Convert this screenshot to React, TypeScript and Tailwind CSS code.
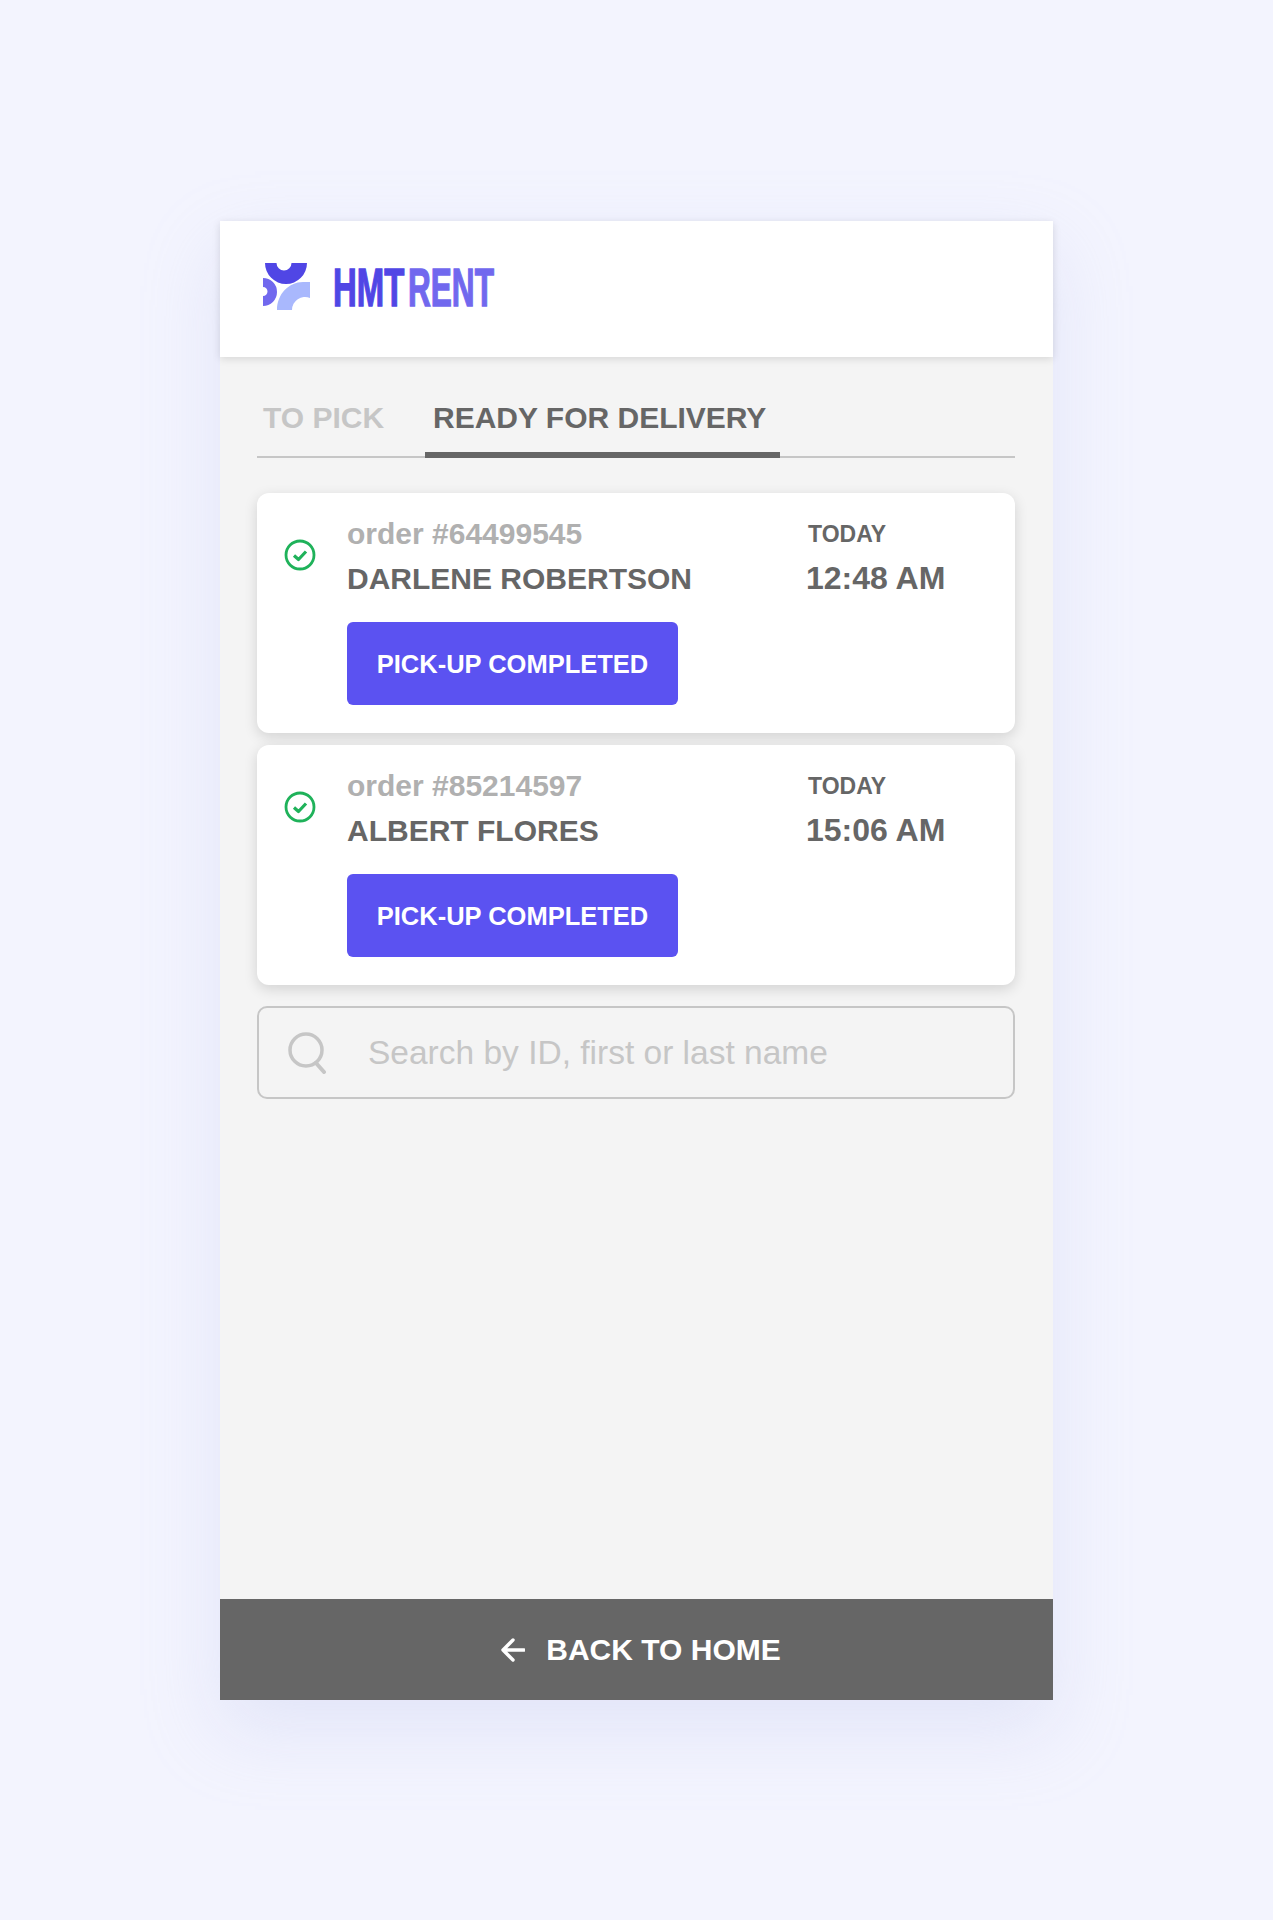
import React from 'react';

const ORDERS = [
  { id: '64499545', name: 'DARLENE ROBERTSON', time: '12:48 AM' },
  { id: '85214597', name: 'ALBERT FLORES', time: '15:06 AM' }
];

const Logo: React.FC = () => (
  <svg width="240" height="60" viewBox="0 0 240 60" className="block">
    <path d="M2 0H13.5A7.5 7.5 0 0 0 28.5 0H44A21 21 0 0 1 2 0Z" fill="#5046e5" />
    <path d="M0 15A14 14 0 0 1 0 43V33A4.5 4.5 0 0 0 0 24Z" fill="#7168ee" />
    <path d="M14 47C14 31 26 19 40 19H47V35A13 13 0 0 0 29 47Z" fill="#a9b8fd" />
    <g fontFamily="'Liberation Sans', sans-serif" fontWeight="700" fontSize="54" strokeWidth="1.4">
      <text transform="translate(70 43) scale(0.61 1)" fill="#5046e5" stroke="#5046e5">HMT</text>
      <text transform="translate(145 43) scale(0.585 1)" fill="#7168ee" stroke="#7168ee">RENT</text>
    </g>
  </svg>
);

const CheckIcon: React.FC = () => (
  <svg width="32" height="32" viewBox="0 0 32 32" fill="none" className="block">
    <circle cx="16" cy="16" r="14" stroke="#1fb25a" strokeWidth="2.8" />
    <path d="M10 16.5L14.5 20.5L22 12.5" stroke="#1fb25a" strokeWidth="3.2" strokeLinejoin="round" />
  </svg>
);

const SearchIcon: React.FC = () => (
  <svg width="40" height="42" viewBox="0 0 40 42" fill="none" className="block">
    <circle cx="18" cy="18" r="16" stroke="#c6c6c6" strokeWidth="3.5" />
    <path d="M28 31L36 40" stroke="#c6c6c6" strokeWidth="4" strokeLinecap="round" />
  </svg>
);

const BackIcon: React.FC = () => (
  <svg width="24" height="24" viewBox="0 0 24 24" fill="none" className="block">
    <path d="M23 12H2M12 2L2 12L12 22" stroke="#ffffff" strokeWidth="3.4" strokeLinecap="round" strokeLinejoin="round" />
  </svg>
);

const App: React.FC = () => {
  return (
    <div className="min-h-[1920px] bg-[#f3f4fe] pl-[220px] pt-[221px] font-['Liberation_Sans',sans-serif]">
      <div className="flex h-[1479px] w-[833px] flex-col bg-[#f4f4f4] shadow-[0_30px_70px_rgb(190_195_235/0.3)]">
        <header className="flex h-[136px] items-start bg-white pl-[43px] pt-[42px] shadow-[0_2px_8px_rgb(0_0_0/0.12)]">
          <Logo />
        </header>

        <main className="flex flex-1 flex-col pl-[37px] pr-[38px]">
          <nav className="mt-[29px] flex h-[72px] border-b-2 border-[#c6c6c6] text-[30px] font-bold">
            <div className="w-[168px] pl-[6px] pt-[14px] leading-[36px] text-[#c6c6c6]">TO PICK</div>
            <div className="-mb-[2px] h-[72px] w-[355px] border-b-[6px] border-[#666] pl-[8px] pt-[14px] leading-[36px] text-[#666]">
              READY FOR DELIVERY
            </div>
          </nav>

          <div className="mt-[35px] flex flex-col gap-[12px]">
            {ORDERS.map((order) => (
              <article key={order.id} className="flex h-[240px] rounded-[12px] bg-white pl-[27px] pt-[23px] shadow-[0_4px_14px_rgb(0_0_0/0.14)]">
                <div className="w-[63px] pt-[23px]">
                  <CheckIcon />
                </div>
                <div className="w-[459px]">
                  <p className="text-[30px] font-bold leading-[36px] text-[#b0b0b0]">order #{order.id}</p>
                  <p className="mt-[9px] text-[30px] font-bold leading-[36px] text-[#666]">{order.name}</p>
                  <button className="mt-[25px] h-[83px] w-[331px] rounded-[6px] bg-[#5b52f1] pt-[2px] text-[25.5px] font-bold text-white">
                    PICK-UP COMPLETED
                  </button>
                </div>
                <div>
                  <p className="pl-[2px] text-[23px] font-bold leading-[36px] text-[#666]">TODAY</p>
                  <p className="mt-[8px] text-[32px] font-bold leading-[36px] text-[#666]">{order.time}</p>
                </div>
              </article>
            ))}
          </div>

          <div className="mt-[21px] flex h-[93px] items-center rounded-[10px] border-[2.5px] border-[#c6c6c6] pl-[29px]">
            <SearchIcon />
            <span className="ml-[40px] pt-[1px] text-[33.5px] text-[#c6c6c6]">Search by ID, first or last name</span>
          </div>
        </main>

        <footer className="flex h-[101px] items-center justify-center gap-[21px] bg-[#666] pl-[9px] text-[30px] font-bold text-white">
          <BackIcon />
          <span>BACK TO HOME</span>
        </footer>
      </div>
    </div>
  );
};

export default App;
